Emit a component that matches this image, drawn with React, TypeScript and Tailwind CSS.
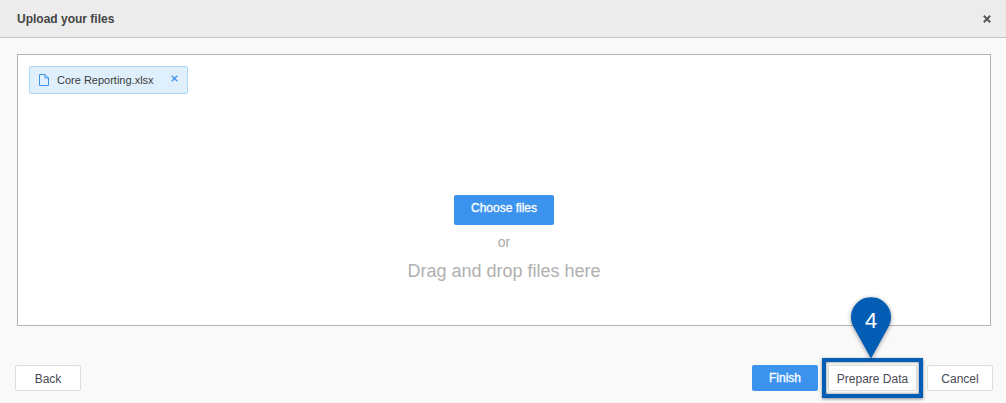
import React from 'react';

function FileIcon() {
  return (
    <svg width="10" height="12" viewBox="0 0 10 12" fill="none" stroke="#3b93ee" strokeWidth="1" className="block">
      <path d="M.5 .5H6L9.5 4V11.5H.5Z" />
      <path d="M6 .5V4H9.5" />
    </svg>
  );
}

function CloseIcon({ size, color, width }: { size: number; color: string; width: number }) {
  return (
    <svg width={size} height={size} viewBox="0 0 10 10" fill="none" stroke={color} strokeWidth={width} className="block">
      <path d="M1 1L9 9M9 1L1 9" />
    </svg>
  );
}

function Pin() {
  return (
    <div className="absolute left-[851px] top-[297px] w-10 h-[62px]">
      <svg width="40" height="62" viewBox="0 0 40 62" className="absolute inset-0 drop-shadow-[0_1px_2px_rgba(0,0,0,0.4)]">
        <path d="M20 61.5L2.6 30A20 20 0 1 1 37.4 30Z" fill="#045db5" />
      </svg>
      <span className="absolute inset-x-0 top-[11px] text-center text-[22px] leading-[26px] text-white">4</span>
    </div>
  );
}

function FooterButton({ label, className }: { label: string; className: string }) {
  return (
    <button type="button" className={"h-[26px] pt-px rounded-[2px] border border-[#dedede] bg-white text-xs text-[#4a4a55] " + className}>
      {label}
    </button>
  );
}

export default function App() {
  return (
    <div className="relative w-[1006px] h-[403px] overflow-hidden bg-[#f9f9f9] font-['Liberation_Sans',Arial,sans-serif]">
      <header className="h-[38px] flex items-center justify-between pl-[17px] pr-[15px] bg-[#ececec] border-b border-[#c4c4c4]">
        <h1 className="text-xs font-bold text-[#444444]">Upload your files</h1>
        <CloseIcon size={8} color="#555555" width={2.4} />
      </header>

      <main className="pt-4 pl-[17px]">
        <section className="relative w-[974px] h-[272px] border border-[#b3b3b3] bg-white">
          <div className="absolute left-[11px] top-[11px] w-[159px] h-7 flex items-center pl-[9px] rounded-[2px] border border-[#a9d7f5] bg-[#dff0fc]">
            <FileIcon />
            <span className="ml-[8px] text-[11px] text-[#3a3a3a]">Core Reporting.xlsx</span>
            <span className="ml-[17px] -mt-[3px]"><CloseIcon size={7} color="#3b93ee" width={1.8} /></span>
          </div>
          <div className="flex flex-col items-center pt-[140px]">
            <button type="button" className="w-[100px] h-[30px] pb-[4px] rounded-[2px] bg-[#3b93ee] text-xs text-white [-webkit-text-stroke:0.3px_white]">
              Choose files
            </button>
            <p className="mt-[9px] text-sm leading-4 text-[#a8a8a8]">or</p>
            <p className="mt-[8px] text-lg leading-[26px] text-[#b0b0b0]">Drag and drop files here</p>
          </div>
        </section>
      </main>

      <footer className="flex items-center pl-[15px] pr-[13px] pt-[39px]">
        <FooterButton label="Back" className="w-[66px]" />
        <div className="ml-auto flex items-center">
          <button type="button" className="w-[66px] h-[26px] rounded-[2px] bg-[#3b93ee] text-xs text-white [-webkit-text-stroke:0.3px_white]">Finish</button>
          <FooterButton label="Prepare Data" className="ml-[10px] w-[89px]" />
          <FooterButton label="Cancel" className="ml-[10px] w-[66px]" />
        </div>
      </footer>

      <div className="absolute left-[822px] top-[358px] w-[101px] h-10 border-[4px] border-[#045db5] shadow-[0_1px_3px_rgba(0,0,0,0.45),inset_0_0_3px_rgba(0,0,0,0.5)]" />
      <Pin />
    </div>
  );
}
